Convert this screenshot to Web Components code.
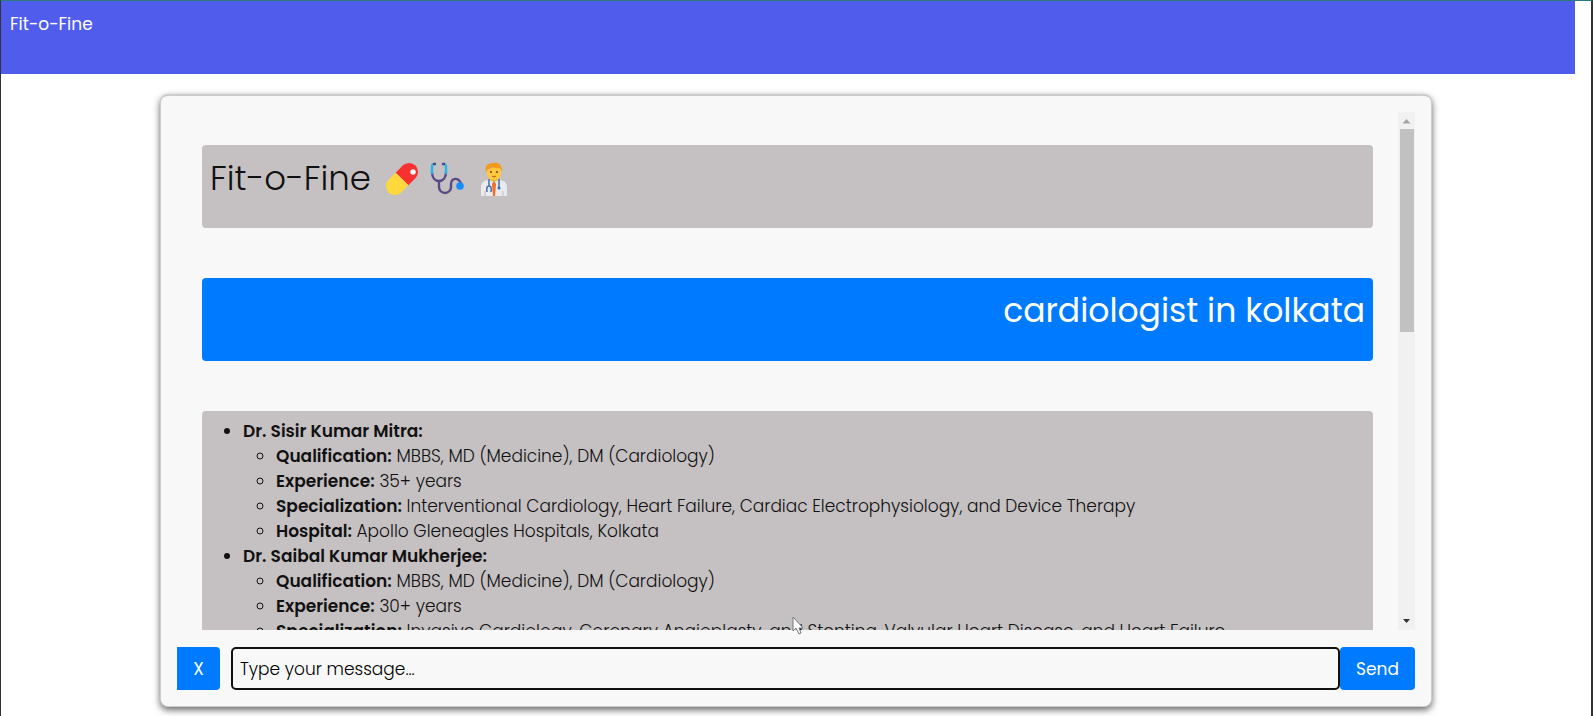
<!DOCTYPE html>
<html lang="en">
<head>
<meta charset="utf-8">
<title>Fit-o-Fine</title>
<style>
  html { height: 100%; }
  body {
    margin: 0;
    height: 100%;
    background: #fff;
    color: #111;
    font-family: Poppins, Inter, "Open Sans", sans-serif;
  }
</style>
</head>
<body>
<fit-app></fit-app>

<template id="t-app">
  <style>
    :host {
      display: flex;
      flex-direction: column;
      box-sizing: border-box;
      height: 100%;
      min-height: 400px;
      border: solid #333;
      border-width: 1px 2px 0 1px;
      border-top-color: #2b7a78;
      overflow: hidden;
    }
    chat-card { flex: 1; min-height: 0; }
    .pointer { position: absolute; left: 792px; top: 616px; }
  </style>
  <fit-header>Fit-o-Fine</fit-header>
  <chat-card>
    <chat-message>
      <span>Fit-o-Fine</span>
      <fit-emoji kind="pill"></fit-emoji>
      <fit-emoji kind="stethoscope"></fit-emoji>
      <fit-emoji kind="doctor"></fit-emoji>
    </chat-message>
    <chat-message from="user">cardiologist in kolkata</chat-message>
    <doctor-list></doctor-list>
    <chat-composer slot="composer"></chat-composer>
  </chat-card>
  <svg class="pointer" width="12" height="19" viewBox="0 0 12 19" aria-hidden="true">
    <path d="M1 1v14l3-3 3 6 2-1-2-5h4z" fill="#fff" stroke="#777" stroke-width="1"/>
  </svg>
</template>

<template id="t-header">
  <style>
    :host { display: block; flex: none; }
    header {
      box-sizing: border-box;
      height: 73px;
      margin-right: 16px;
      padding: 11px 9px;
      background: #505ceb;
      color: #fff;
      font-size: 17px;
      line-height: 25px;
    }
  </style>
  <header><slot></slot></header>
</template>

<template id="t-card">
  <style>
    :host {
      display: flex;
      flex-direction: column;
      gap: 17px;
      box-sizing: border-box;
      width: 80%;
      margin: 20px auto 9px;
      padding: 16px;
      border: 1px solid #ccc;
      border-width: 2px 1px 1px;
      border-radius: 8px;
      background: #f8f8f8;
      box-shadow: 0 3px 7px rgba(0, 0, 0, .6);
    }
    .body { flex: 1; min-height: 0; display: flex; }
    .log {
      flex: 1;
      overflow: auto;
      scrollbar-width: none;
      box-sizing: border-box;
      padding: 33px 25px 25px;
      display: flex;
      flex-direction: column;
      gap: 50px;
    }
    ::slotted(*) { flex: none; }
  </style>
  <div class="body">
    <div class="log"><slot></slot></div>
    <scroll-rail></scroll-rail>
  </div>
  <slot name="composer"></slot>
</template>

<template id="t-rail">
  <style>
    :host {
      display: flex;
      flex-direction: column;
      align-items: center;
      width: 17px;
      flex: none;
      background: #f1f1f1;
    }
    svg { flex: none; }
    .track { flex: 1; width: 14px; }
    .thumb { height: 42%; background: #c1c1c1; }
  </style>
  <svg width="17" height="17" aria-hidden="true"><path d="M4.500 11.500h8l-4-4.500z" fill="#a3a3a3"/></svg>
  <div class="track"><div class="thumb"></div></div>
  <svg width="17" height="17" aria-hidden="true"><path d="M5 6h7l-3.500 4z" fill="#333"/></svg>
</template>

<template id="t-message">
  <style>
    :host {
      display: block;
      box-sizing: border-box;
      min-height: 83px;
      padding: 8px;
      border-radius: 4px;
      background: #c5c0c1;
      font-size: 34px;
      font-weight: 300;
      line-height: 50px;
    }
    :host([from="user"]) {
      background: #007bff;
      color: #fff;
      font-size: 33px;
      font-weight: 400;
      text-align: right;
    }
  </style>
  <slot></slot>
</template>

<template id="t-doctors">
  <style>
    :host {
      display: block;
      padding: 8px;
      border-radius: 4px;
      background: #c5c0c1;
      font-size: 17px;
      font-weight: 300;
      line-height: 25px;
    }
    ul { margin: 0; padding-left: 33px; }
    ul ul { list-style: circle; }
    b { font-weight: 600; }
  </style>
  <ul>
    <li><b>Dr. Sisir Kumar Mitra:</b>
      <ul>
        <li><b>Qualification:</b> MBBS, MD (Medicine), DM (Cardiology)</li>
        <li><b>Experience:</b> 35+ years</li>
        <li><b>Specialization:</b> Interventional Cardiology, Heart Failure, Cardiac Electrophysiology, and Device Therapy</li>
        <li><b>Hospital:</b> Apollo Gleneagles Hospitals, Kolkata</li>
      </ul>
    </li>
    <li><b>Dr. Saibal Kumar Mukherjee:</b>
      <ul>
        <li><b>Qualification:</b> MBBS, MD (Medicine), DM (Cardiology)</li>
        <li><b>Experience:</b> 30+ years</li>
        <li><b>Specialization:</b> Invasive Cardiology, Coronary Angioplasty, and Stenting, Valvular Heart Disease, and Heart Failure</li>
      </ul>
    </li>
  </ul>
</template>

<template id="t-composer">
  <style>
    :host { display: block; }
    form { display: flex; height: 43px; margin: 0; }
    button, input { font: inherit; font-size: 17px; box-sizing: border-box; margin: 0; }
    button { border: 0; background: #007bff; color: #fff; padding: 0; cursor: pointer; }
    .clear { width: 43px; margin-right: 11px; border-radius: 0 4px 4px 0; }
    .send { width: 75px; border-radius: 4px; }
    input {
      flex: 1;
      min-width: 0;
      padding: 0 7px;
      border: 2px solid #111;
      border-radius: 5px;
      background: #f8f8f8;
      font-weight: 300;
      color: #000;
    }
    input::placeholder { color: #000; opacity: 1; }
  </style>
  <form>
    <button class="clear" type="reset" aria-label="Clear">X</button>
    <input type="text" aria-label="Message" placeholder="Type your message...">
    <button class="send" type="button">Send</button>
  </form>
</template>

<template id="t-emoji">
  <style>
    :host { display: inline-block; width: 34px; height: 34px; margin-right: 1px; vertical-align: -6px; }
    :host([kind="pill"]) { margin-left: 5px; }
    :host([kind="doctor"]) { margin-left: 3px; }
    svg { display: none; width: 34px; height: 34px; }
    :host([kind="pill"]) .pill,
    :host([kind="stethoscope"]) .stethoscope,
    :host([kind="doctor"]) .doctor { display: block; }
  </style>
  <svg class="pill" viewBox="0 0 34 34" role="img" aria-label="Pill">
    <g transform="rotate(45 17 17)">
      <path d="M8 17V7a9 9 0 0 1 18 0v10z" fill="#f8312f"/>
      <path d="M8 17h18v10a9 9 0 0 1-18 0z" fill="#ffd83d"/>
    </g>
    <circle cx="28" cy="10" r="2.700" fill="#fff"/>
  </svg>
  <svg class="stethoscope" viewBox="0 0 34 34" role="img" aria-label="Stethoscope">
    <g fill="none" stroke-width="2.400" stroke-linecap="round">
      <path d="M2 10c0 6 3 9 7 9s7-3 7-9M9 19v6a6 6 0 0 0 12 0v-3c0-7 9-7 10 1" stroke="#594a86"/>
      <path d="M5 2C2 2 2 3 2 6v5M13 2c3 0 3 1 3 4v5" stroke="#26b4ec"/>
      <path d="M5 2h-1M13 2h1" stroke="#594a86"/>
    </g>
    <circle cx="30" cy="24" r="3.800" fill="#148cfb"/>
  </svg>
  <svg class="doctor" viewBox="0 0 34 34" role="img" aria-label="Doctor">
    <path d="M4 34V26q0-8 8-8h10q8 0 8 8v8z" fill="#e9e9ee"/>
    <path d="M12 17h10l-5 8z" fill="#d0e6f8"/>
    <path d="M17 19l2 3-1 12h-2l-1-12z" fill="#f36b24"/>
    <path d="M13 14h8v4l-4 2-4-2z" fill="#f5ad26"/>
    <path d="M10 6h14v6a7 6 0 0 1-14 0z" fill="#ffc83d"/>
    <path d="M9 10Q7 1 16 1q9-2 9 9l-2-4q-5 1-7-1-2 2-5 2z" fill="#f29a1c"/>
    <circle cx="14" cy="10" r="1" fill="#6b4420"/><circle cx="20" cy="10" r="1" fill="#6b4420"/>
    <path d="M15 14q2 2 4 0" stroke="#b5521b" fill="none"/>
    <path d="M12 17v7M10 30q-1-6 2-6t2 6M22 17v8" fill="none" stroke="#416da5" stroke-width="1.500"/>
    <circle cx="22" cy="26" r="1.600" fill="#2f75c8"/>
    <path d="M8 29v5M26 29v5" stroke="#bfc0c9"/>
  </svg>
</template>

<script>
  const define = (name, templateId) => {
    customElements.define(name, class extends HTMLElement {
      constructor() {
        super();
        this.attachShadow({ mode: 'open' })
          .append(document.getElementById(templateId).content.cloneNode(true));
      }
    });
  };
  define('fit-emoji', 't-emoji');
  define('scroll-rail', 't-rail');
  define('fit-header', 't-header');
  define('chat-message', 't-message');
  define('doctor-list', 't-doctors');
  define('chat-composer', 't-composer');
  define('chat-card', 't-card');
  define('fit-app', 't-app');
</script>
</body>
</html>
